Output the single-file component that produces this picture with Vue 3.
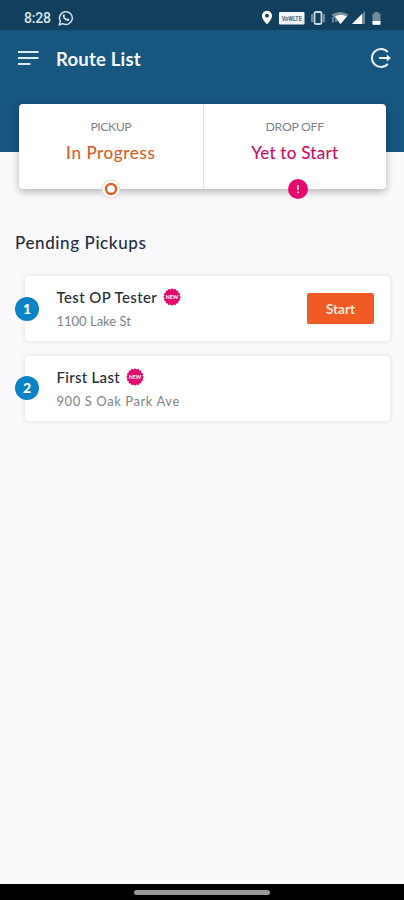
<script setup>
const legs = [
  { label: 'PICKUP', status: 'In Progress', kind: 'active' },
  { label: 'DROP OFF', status: 'Yet to Start', kind: 'waiting' },
]
const stops = [
  { name: 'Test OP Tester', address: '1100 Lake St', startable: true, kind: 'first' },
  { name: 'First Last', address: '900 S Oak Park Ave', startable: false, kind: 'second' },
]
const points = 16
const burst = Array.from({ length: points * 2 }, (_, i) => {
  const r = i % 2 ? 7.7 : 8.8
  const a = (i * Math.PI) / points
  return `${(9 + r * Math.sin(a)).toFixed(2)},${(9 - r * Math.cos(a)).toFixed(2)}`
}).join(' ')
</script>

<template>
  <div class="screen">
    <div class="status-bar">
      <span class="clock">8:28</span>
      <svg class="whatsapp" width="16" height="16" viewBox="0 0 16 16">
        <path d="M1.4 14.6l.9-3.4a6.4 6.4 0 1 1 2.5 2.5z" fill="none" stroke="#d3e0e8" stroke-width="1.5" />
        <path d="M5.2 4.4c.7-.5 1.2-.3 1.5.5l.4 1-.6.9c.5 1 1.3 1.7 2.4 2.2l.8-.8 1.5.8c.4.3.3.9-.2 1.4-1.1 1-2.7.5-4.3-.8-1.6-1.5-2.7-3.7-1.5-5.2z" fill="#d3e0e8" />
      </svg>
      <svg class="indicators" width="124" height="20" viewBox="0 0 124 20">
        <path d="M7 2.8a5.1 5.1 0 0 0-5.1 5.1c0 3.4 5.1 8.3 5.1 8.3s5.1-4.9 5.1-8.3A5.1 5.1 0 0 0 7 2.8z" fill="#fff" />
        <circle cx="7" cy="7.7" r="1.9" fill="#123f5e" />
        <rect x="19" y="4" width="25.5" height="12.5" rx="1" fill="#f3f6f8" />
        <text x="31.7" y="13" text-anchor="middle" textLength="20" lengthAdjust="spacingAndGlyphs" class="volte">VoWLTE</text>
        <rect x="54.5" y="4" width="7" height="12" rx="1.5" fill="none" stroke="#cbd8e0" stroke-width="1.8" />
        <path d="M52 6v8M64 6v8" stroke="#8ba5b5" stroke-width="1.5" />
        <path d="M71.500 6.500Q80 1.500 88.500 6.500L80.500 16z" fill="#77909f" />
        <path d="M75 8.500Q80.500 5 87 8.500L80.500 16z" fill="#fff" />
        <path d="M73 9v5.500M76 11v3" stroke="#9cb1be" stroke-width="1.200" />
        <path d="M92 16L105 3v13z" fill="#6f8b9c" />
        <path d="M92 16L102 6v10z" fill="#fff" />
        <path d="M112.500 5.500h2V4h4v1.500h2v10.500a.8.800 0 0 1-.8.800h-6.400a.8.800 0 0 1-.8-.8z" fill="#6f8b9c" />
        <path d="M112.500 13h8v3a.8.800 0 0 1-.8.800h-6.400a.8.800 0 0 1-.8-.8z" fill="#fff" />
      </svg>
    </div>

    <header class="app-bar">
      <svg width="21" height="16" viewBox="0 0 21 16">
        <path d="M0 2h20.500M0 8h20.500M0 14h12.500" stroke="#dceaf3" stroke-width="2.200" />
      </svg>
      <h1>Route List</h1>
      <svg class="exit" width="22" height="22" viewBox="0 0 22 22">
        <path d="M17.800 5.200A9 9 0 1 0 17.800 16.800" fill="none" stroke="#e8f1f6" stroke-width="2" />
        <path d="M9 11h10" stroke="#fff" stroke-width="2" />
        <path d="M16.800 7.500L20.800 11l-4 3.500z" fill="#fff" />
      </svg>
    </header>

    <section class="summary">
      <div v-for="leg in legs" :key="leg.label" class="leg" :class="leg.kind">
        <div class="leg-label">{{ leg.label }}</div>
        <div class="leg-status">{{ leg.status }}</div>
        <svg class="marker" width="22" height="22" viewBox="0 0 22 22">
          <template v-if="leg.kind === 'active'">
            <circle cx="11" cy="11" r="9" fill="#fff" stroke="#f3d5c8" stroke-width="1" />
            <circle cx="11" cy="11" r="5" fill="#fff" stroke="#e45d2a" stroke-width="2.400" />
          </template>
          <template v-else>
            <circle cx="11" cy="11" r="10" fill="#e3096d" />
            <path d="M11 7v5M11 13.500v1.800" stroke="#fbd5e6" stroke-width="1.700" />
          </template>
        </svg>
      </div>
    </section>

    <main>
      <h2>Pending Pickups</h2>
      <article v-for="(stop, i) in stops" :key="stop.name" class="stop" :class="stop.kind">
        <span class="number">{{ i + 1 }}</span>
        <div class="details">
          <div class="name-row">
            <span class="name">{{ stop.name }}</span>
            <svg width="18" height="18" viewBox="0 0 18 18">
              <polygon :points="burst" fill="#e3096d" />
              <text x="9" y="10.900" text-anchor="middle" textLength="12.500" lengthAdjust="spacingAndGlyphs" class="new">NEW</text>
            </svg>
          </div>
          <div class="address">{{ stop.address }}</div>
        </div>
        <button v-if="stop.startable">Start</button>
      </article>
    </main>

    <footer><span class="home"></span></footer>
  </div>
</template>

<style>
body { background: #fafafd; }
</style>

<style scoped>
.screen {
  display: flex;
  flex-direction: column;
  height: 900px;
  background: #fafafd;
  font-family: Lato, "Open Sans", sans-serif;
}
.status-bar {
  display: flex;
  align-items: center;
  box-sizing: border-box;
  height: 30px;
  padding: 5px 20px 0 24px;
  background: #123f5e;
}
.clock {
  width: 34px;
  font: 500 14px/20px Roboto, sans-serif;
  letter-spacing: -0.2px;
  color: #d9e4eb;
}
.indicators { margin-left: auto; }
.volte { font: 700 7px Roboto, sans-serif; fill: #4d6878; }
.new { font: 900 5px Lato, sans-serif; fill: #fff; }
.app-bar {
  display: flex;
  align-items: flex-start;
  box-sizing: border-box;
  height: 122px;
  padding: 20px 12px 0 18px;
  background: #17567f;
}
h1 {
  margin: -3px 0 0 17px;
  font-size: 18.5px;
  line-height: 24px;
  font-weight: 700;
  letter-spacing: 0.2px;
  color: #f4f8fb;
}
.exit { margin: -3px 0 0 auto; }
.summary {
  display: grid;
  grid-template-columns: 1fr 1fr;
  position: relative;
  margin: -48px 18px 0 19px;
  height: 85px;
  border-radius: 4px;
  background: #fff;
  box-shadow: 0 3px 8px rgba(0, 0, 0, 0.28);
}
.leg { position: relative; text-align: center; padding-top: 15px; }
.leg + .leg { border-left: 1px solid #e6e6e9; }
.leg-label { font-size: 12px; line-height: 16px; color: #7b838e; letter-spacing: -0.3px; }
.leg-status { margin-top: 7px; font-size: 17px; line-height: 22px; font-weight: 500; }
.active .leg-label { letter-spacing: -0.5px; }
.active .leg-label, .waiting .leg-label { font-size: 12.3px; }
.active .leg-status { color: #dc5c2a; letter-spacing: 0.6px; }
.waiting .leg-status { color: #cf0e67; letter-spacing: 0.25px; }
.marker { position: absolute; left: calc(50% - 11px); bottom: -11px; }
.waiting .marker { left: calc(50% - 7.5px); }
main { flex: 1; padding: 42px 14px 0 15px; }
h2 {
  margin: 0 0 21px;
  font-size: 17px;
  line-height: 24px;
  font-weight: 500;
  letter-spacing: 0.6px;
  color: #262d3b;
}
.stop {
  display: flex;
  align-items: center;
  box-sizing: border-box;
  height: 65px;
  margin: 0 0 14.5px 10px;
  padding-right: 16px;
  border-radius: 4px;
  background: #fff;
  box-shadow: 0 0 4px 1px rgba(0, 0, 0, 0.09);
}
.number {
  width: 24px;
  height: 24px;
  margin-left: -10px;
  border-radius: 50%;
  background: #0c82c6;
  color: #fff;
  font-size: 14px;
  line-height: 24px;
  font-weight: 900;
  text-align: center;
}
.details { margin-left: 17.5px; }
.name-row { display: flex; align-items: center; gap: 6px; height: 20px; }
.name { font-size: 15px; line-height: 20px; font-weight: 500; color: #232a35; letter-spacing: 0.4px; }
.address { margin-top: 5px; font-size: 13px; line-height: 18px; color: #80848a; }
.first .address { letter-spacing: 0; }
.second .address { letter-spacing: 0.58px; }
.second .name { letter-spacing: 0.3px; }
button {
  width: 67px;
  height: 31px;
  margin-left: auto;
  padding: 0;
  border: 0;
  border-radius: 2px;
  background: #f05a24;
  color: #ffe9df;
  font: 700 13.5px Lato, sans-serif;
}
footer {
  display: flex;
  justify-content: center;
  box-sizing: border-box;
  height: 16px;
  padding-top: 6px;
  background: #000;
}
.home { width: 136px; height: 5px; border-radius: 3px; background: #999; }
</style>
